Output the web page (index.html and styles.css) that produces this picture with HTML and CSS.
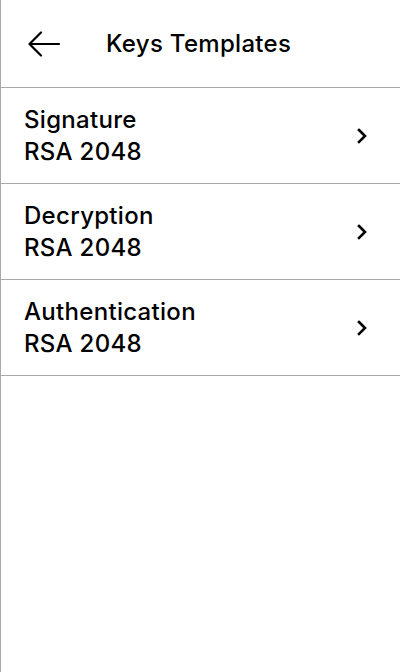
FILE: index.html
```html
<!DOCTYPE html>
<html>
<head>
<meta charset="utf-8">
<link rel="stylesheet" href="styles.css">
</head>
<body>
<div class="screen">
  <header class="header">
    <svg class="back" width="32" height="26" viewBox="0 0 32 26" fill="none" stroke="#000" stroke-width="2.2" stroke-linecap="round" stroke-linejoin="round">
      <path d="M31 13H2"/>
      <path d="M13 1.5L1.5 13L13 24.5"/>
    </svg>
    <h1 class="title">Keys Templates</h1>
  </header>
  <ul class="list">
    <li class="row">
      <div class="text"><div>Signature</div><div>RSA 2048</div></div>
      <svg class="chev" width="12" height="16" viewBox="0 0 12 16" fill="none" stroke="#000" stroke-width="2.6" stroke-linecap="square"><path d="M3 2L9 8L3 14"/></svg>
    </li>
    <li class="row">
      <div class="text"><div>Decryption</div><div>RSA 2048</div></div>
      <svg class="chev" width="12" height="16" viewBox="0 0 12 16" fill="none" stroke="#000" stroke-width="2.6" stroke-linecap="square"><path d="M3 2L9 8L3 14"/></svg>
    </li>
    <li class="row">
      <div class="text"><div>Authentication</div><div>RSA 2048</div></div>
      <svg class="chev" width="12" height="16" viewBox="0 0 12 16" fill="none" stroke="#000" stroke-width="2.6" stroke-linecap="square"><path d="M3 2L9 8L3 14"/></svg>
    </li>
  </ul>
</div>
</body>
</html>
```
FILE: styles.css
```css
* { box-sizing: border-box; }
html, body { margin: 0; padding: 0; background: #fff; }
body { font-family: Inter, "Noto Sans", sans-serif; color: #000; }
.screen {
  width: 400px;
  height: 672px;
  border-left: 1px solid #a8a8a8;
  background: #fff;
}
.header {
  height: 88px;
  border-bottom: 1px solid #a8a8a8;
  display: flex;
  align-items: center;
  padding-left: 27px;
}
.back { display: block; }
.title {
  margin: 0 0 0 46px;
  font-size: 24px;
  font-weight: 550;
  letter-spacing: 0.3px;
}
.list { list-style: none; margin: 0; padding: 0; }
.row {
  height: 96px;
  border-bottom: 1px solid #a8a8a8;
  display: flex;
  align-items: center;
  justify-content: space-between;
  padding: 0 32px 0 23px;
}
.text {
  font-size: 24px;
  font-weight: 550;
  line-height: 32px;
  letter-spacing: 0.3px;
}
.chev { display: block; }
```
